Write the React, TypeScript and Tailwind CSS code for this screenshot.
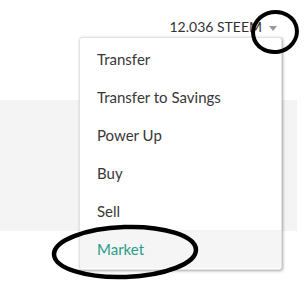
import React from "react";

const items = ["Transfer", "Transfer to Savings", "Power Up", "Buy", "Sell", "Market"];

const App = () => {
  return (
    <div
      className="relative w-[307px] h-[282px] bg-white overflow-hidden"
      style={{ fontFamily: "Lato, 'Open Sans', sans-serif" }}
    >
      <div className="flex justify-end items-center h-[56px] pr-[30px] pb-[2px]">
        <span className="text-[14px] text-[#333] leading-none">12.036 STEEM</span>
        <span className="ml-[7px] mt-[2px] w-0 h-0 border-l-[4px] border-r-[4px] border-t-[5px] border-l-transparent border-r-transparent border-t-[#999]" />
      </div>
      <div className="mt-[44px] w-[297px] h-[131px] bg-[#f4f4f4]" />

      <div className="absolute left-[79px] top-[37px] w-[203px] rounded-[3px] bg-white border border-[#e2e2e2] shadow-[1px_1px_3px_rgba(0,0,0,0.35)] pt-[2px] pb-[1px]">
        <ul>
          {items.map((item) => (
            <li
              key={item}
              className={
                item === "Market"
                  ? "h-[38px] flex items-center pl-[17px] text-[15px] text-[#2a9d8a] bg-[#f5f5f5]"
                  : "h-[38px] flex items-center pl-[17px] text-[15px] text-[#383838]"
              }
            >
              {item}
            </li>
          ))}
        </ul>
      </div>

      <svg className="absolute left-0 top-0 pointer-events-none" width="307" height="282">
        <ellipse cx="275" cy="32" rx="22" ry="20" fill="none" stroke="#000" strokeWidth="4" transform="rotate(-10 275 32)" />
        <ellipse cx="125" cy="252" rx="71" ry="25" fill="none" stroke="#000" strokeWidth="4.5" transform="rotate(-2 125 252)" />
      </svg>
    </div>
  );
};

export default App;
